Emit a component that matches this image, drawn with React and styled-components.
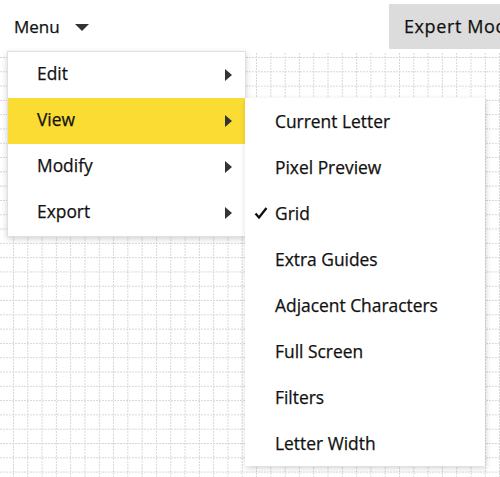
import React from 'react';
import styled, { createGlobalStyle } from 'styled-components';

const GlobalStyle = createGlobalStyle`
  html, body {
    margin: 0;
    padding: 0;
    background: #fff;
    overflow: hidden;
  }
  body {
    font-family: 'Open Sans', 'DejaVu Sans', sans-serif;
    color: #111;
    -webkit-text-stroke: 0.25px #111;
  }
`;

const Page = styled.div`
  position: relative;
  width: 500px;
  height: 477px;
  overflow: hidden;
  display: flex;
  flex-direction: column;
`;

const Header = styled.div`
  height: 53px;
  display: flex;
  align-items: flex-start;
  justify-content: space-between;
  padding-top: 4px;
  box-sizing: border-box;
`;

const MenuToggle = styled.div`
  display: flex;
  align-items: center;
  gap: 15px;
  height: 45px;
  padding-left: 14px;
  font-size: 17px;
`;

const Caret = styled.span`
  width: 0;
  height: 0;
  border-left: 7px solid transparent;
  border-right: 7px solid transparent;
  border-top: 7px solid #333;
  margin-top: 1px;
`;

const ExpertButton = styled.button`
  height: 45px;
  width: 140px;
  flex-shrink: 0;
  margin-right: -29px;
  border: none;
  background: #dcdcdc;
  font-family: inherit;
  font-size: 18px;
  letter-spacing: 0.6px;
  color: #111;
  text-align: left;
  padding: 0 0 2px 15px;
  white-space: nowrap;
`;

// dotted grid background
const Canvas = styled.div`
  position: relative;
  flex: 1;
  &::before,
  &::after {
    content: '';
    position: absolute;
    inset: 0;
  }
  &::before {
    background: linear-gradient(to bottom, #d6d6d6 1px, transparent 1px) 0 4px / 100% 14.3px;
    -webkit-mask-image: repeating-linear-gradient(90deg, #000 0 2px, transparent 2px 3px);
    mask-image: repeating-linear-gradient(90deg, #000 0 2px, transparent 2px 3px);
  }
  &::after {
    background: linear-gradient(to right, #d6d6d6 1px, transparent 1px) 13px 0 / 14.3px 100%;
    -webkit-mask-image: repeating-linear-gradient(180deg, #000 0 2px, transparent 2px 3px);
    mask-image: repeating-linear-gradient(180deg, #000 0 2px, transparent 2px 3px);
  }
`;

const Dropdown = styled.ul`
  position: absolute;
  left: 7px;
  top: 51px;
  width: 237px;
  margin: 0;
  padding: 0;
  list-style: none;
  background: #fff;
  border: 1px solid #e0e0e0;
  box-shadow: 0 2px 6px rgba(0, 0, 0, 0.18);
  z-index: 2;
`;

const Item = styled.li`
  position: relative;
  height: 46px;
  box-sizing: border-box;
  display: flex;
  align-items: center;
  justify-content: space-between;
  padding: 0 13px 4px 29px;
  font-size: 17.4px;
  background: ${(p) => (p.$active ? '#fadc33' : 'transparent')};
`;

const SubArrow = styled.span`
  width: 0;
  height: 0;
  margin-top: 3px;
  border-top: 6px solid transparent;
  border-bottom: 6px solid transparent;
  border-left: 7px solid #333;
`;

const Submenu = styled.ul`
  position: absolute;
  left: 237px;
  top: 0;
  width: 240px;
  margin: 0;
  padding: 0;
  list-style: none;
  background: #fff;
  box-shadow: 1px 2px 6px rgba(0, 0, 0, 0.18);
`;

const SubItem = styled.li`
  position: relative;
  height: 46px;
  box-sizing: border-box;
  display: flex;
  align-items: center;
  padding: 0 0 0 30px;
  font-size: 17.4px;
`;

const Check = styled.svg`
  position: absolute;
  left: 9px;
  top: 17px;
`;

const viewItems = [
  'Current Letter',
  'Pixel Preview',
  'Grid',
  'Extra Guides',
  'Adjacent Characters',
  'Full Screen',
  'Filters',
  'Letter Width',
];

export default function App() {
  return (
    <>
      <GlobalStyle />
      <Page>
        <Header>
          <MenuToggle>
            Menu
            <Caret />
          </MenuToggle>
          <ExpertButton>Expert Mode</ExpertButton>
        </Header>
        <Canvas />

        <Dropdown>
          <Item>
            Edit
            <SubArrow />
          </Item>
          <Item $active>
            View
            <SubArrow />
            <Submenu>
              {viewItems.map((label) => (
                <SubItem key={label}>
                  {label === 'Grid' && (
                    <Check width="14" height="12" viewBox="0 0 14 12">
                      <path d="M1.5 6.5 L5 10.5 L12.5 1" fill="none" stroke="#111" strokeWidth="2.3" />
                    </Check>
                  )}
                  {label}
                </SubItem>
              ))}
            </Submenu>
          </Item>
          <Item>
            Modify
            <SubArrow />
          </Item>
          <Item>
            Export
            <SubArrow />
          </Item>
        </Dropdown>
      </Page>
    </>
  );
}
